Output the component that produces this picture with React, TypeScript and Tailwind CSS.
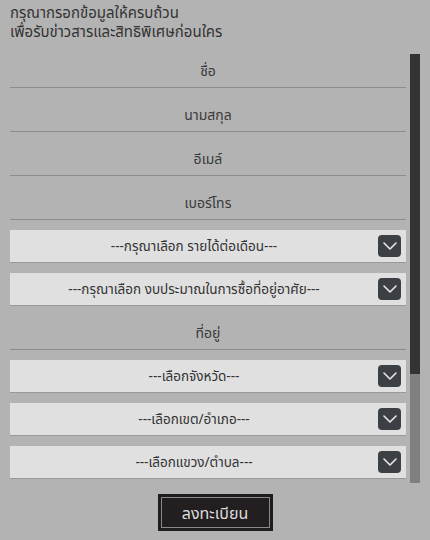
import React from 'react';

const ChevronBox: React.FC = () => (
  <div className="flex h-[22px] w-[23px] shrink-0 items-center justify-center rounded-[4px] bg-[#3c3f44]">
    <svg width="14" height="8" viewBox="0 0 14 8" fill="none">
      <path d="M1 1l6 6 6-6" stroke="#e6e6e6" strokeWidth="1.6" strokeLinecap="round" strokeLinejoin="round" />
    </svg>
  </div>
);

const TextRow: React.FC<{ label: string }> = ({ label }) => (
  <div className="flex h-[44px] items-end justify-center border-b border-[#8c8c8c] pb-[6px]">
    <span className="text-[14px] leading-[20px] text-[#3a3a3a]">{label}</span>
  </div>
);

const SelectRow: React.FC<{ label: string; className?: string }> = ({ label, className }) => (
  <div className={`flex h-[33px] items-center border-b border-[#999] bg-[#e0e0e0] pr-[5px] ${className ?? ''}`}>
    <span className="flex-1 text-center text-[13.5px] leading-[18px] text-[#333]">{label}</span>
    <ChevronBox />
  </div>
);

export default function App() {
  return (
    <div
      className="h-[540px] w-[430px] overflow-hidden bg-[#b3b3b3]"
      style={{ fontFamily: '"Noto Sans", "Noto Sans Thai", "Liberation Sans", sans-serif' }}
    >
      <div className="px-[10px] pt-[3px] text-[15px] leading-[19px] text-[#333]">
        <p>กรุณากรอกข้อมูลให้ครบถ้วน</p>
        <p>เพื่อรับข่าวสารและสิทธิพิเศษก่อนใคร</p>
      </div>

      <div className="mt-[3px] flex">
        <div className="ml-[10px] w-[396px]">
          <TextRow label="ชื่อ" />
          <TextRow label="นามสกุล" />
          <TextRow label="อีเมล์" />
          <TextRow label="เบอร์โทร" />
          <SelectRow label="---กรุณาเลือก รายได้ต่อเดือน---" className="mt-[10px]" />
          <SelectRow label="---กรุณาเลือก งบประมาณในการซื้อที่อยู่อาศัย---" className="mt-[10px]" />
          <TextRow label="ที่อยู่" />
          <SelectRow label="---เลือกจังหวัด---" className="mt-[10px]" />
          <SelectRow label="---เลือกเขต/อำเภอ---" className="mt-[10px]" />
          <SelectRow label="---เลือกแขวง/ตำบล---" className="mt-[10px]" />
        </div>
        <div className="ml-[4px] mt-[10px] flex h-[429px] w-[10px] flex-col bg-[#808080]">
          <div className="h-[320px] bg-[#333]" />
        </div>
      </div>

      <div className="mt-[11px] flex justify-center">
        <button className="h-[37px] w-[115px] border-[3px] border-[#1e1e1e] bg-[#231f20] text-[16px] text-[#ddd] shadow-[inset_0_0_0_1px_#8a8a8a]">
          ลงทะเบียน
        </button>
      </div>
    </div>
  );
}
